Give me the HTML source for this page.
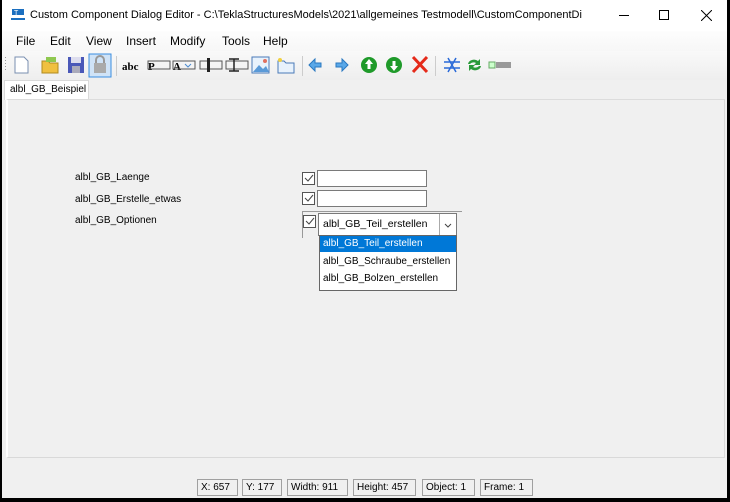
<!DOCTYPE html>
<html><head><meta charset="utf-8"><style>
*{margin:0;padding:0;box-sizing:border-box}
body{width:730px;height:502px;background:#000;font-family:"Liberation Sans",sans-serif;font-size:11px;color:#000;position:relative;overflow:hidden}
#win{position:absolute;left:2px;top:0;width:725px;height:498px;background:#f0f0f0}
.abs{position:absolute}
#title{left:0;top:0;width:725px;height:31px;background:#fff}
#menu{left:0;top:31px;width:725px;height:20px;background:linear-gradient(#fdfdfd,#f7f7f7)}
#tool{left:0;top:51px;width:725px;height:29px;background:linear-gradient(#f9f9f9,#eeeeee)}
.m{position:absolute;top:3px;font-size:12px}
.lbl{position:absolute;font-size:10px}
.cb{position:absolute;width:13px;height:13px;border:1px solid #555;background:#fff}
.cb svg{position:absolute;left:0;top:0}
.tb{position:absolute;height:17px;border:1px solid #7a7a7a;background:#fff}
.st{position:absolute;top:479px;height:17px;border:1px solid #a0a0a0;font-size:10px;padding:2px 0 0 3px;background:#f0f0f0;white-space:nowrap;overflow:hidden}
</style></head><body>
<div id="win">
<div id="title" class="abs">
 <svg class="abs" style="left:9px;top:8px" width="14" height="13"><rect x="1" y="1" width="12" height="6" fill="#1b6fc0"/><rect x="0" y="10" width="14" height="2" fill="#1b6fc0"/><text x="3" y="7" font-size="7" fill="#fff" font-family="Liberation Sans">T</text></svg>
 <div class="abs" style="left:28px;top:9px;font-size:11px;white-space:nowrap;overflow:hidden;width:552px">Custom Component Dialog Editor - C:\TeklaStructuresModels\2021\allgemeines Testmodell\CustomComponentDial...</div>
 <div class="abs" style="left:617px;top:15px;width:10px;height:1px;background:#000"></div>
 <div class="abs" style="left:657px;top:10px;width:10px;height:10px;border:1px solid #000"></div>
 <svg class="abs" style="left:699px;top:10px" width="11" height="11"><path d="M0 0L11 11M11 0L0 11" stroke="#000" stroke-width="1"/></svg>
</div>
<div id="menu" class="abs">
 <span class="m" style="left:14px">File</span><span class="m" style="left:48px">Edit</span><span class="m" style="left:84px">View</span><span class="m" style="left:124px">Insert</span><span class="m" style="left:168px">Modify</span><span class="m" style="left:220px">Tools</span><span class="m" style="left:261px">Help</span>
</div>
<div id="tool" class="abs"></div>
<svg class="abs" style="left:0;top:52px" width="520" height="28">
 <g fill="#999"><rect x="3" y="5" width="1" height="1"/><rect x="3" y="8" width="1" height="1"/><rect x="3" y="11" width="1" height="1"/><rect x="3" y="14" width="1" height="1"/><rect x="3" y="17" width="1" height="1"/></g>
 <path d="M13 5h9l4 4v12H13z" fill="#fff" stroke="#7a8fb0"/>
 <path d="M40 9h6l2 2h8v10H40z" fill="#f0c040" stroke="#b08a20"/><path d="M44 5h10v5H44z" fill="#8fc850"/>
 <rect x="66" y="5" width="16" height="16" fill="#4a58b8"/><rect x="69" y="5" width="10" height="6" fill="#dde"/><rect x="70" y="14" width="8" height="7" fill="#aab"/>
 <rect x="87" y="2" width="22" height="23" fill="#cfe3f7" stroke="#3a8ee0"/><rect x="92" y="11" width="12" height="10" fill="#aaa"/><path d="M94 11v-3a4 4 0 0 1 8 0v3" fill="none" stroke="#999" stroke-width="2"/>
 <rect x="114" y="4" width="1" height="20" fill="#ccc"/>
 <text x="120" y="18" font-family="Liberation Serif" font-size="11" font-weight="bold">abc</text>
 <text x="146" y="18" font-family="Liberation Serif" font-size="11" font-weight="bold">P</text><rect x="146" y="9" width="22" height="8" fill="none" stroke="#555"/>
 <text x="171" y="18" font-family="Liberation Serif" font-size="11" font-weight="bold">A</text><rect x="171" y="9" width="22" height="8" fill="none" stroke="#555"/><path d="M183 12l3 3 3-3" stroke="#4a8ad0" fill="none"/>
 <rect x="198" y="9" width="22" height="8" fill="none" stroke="#555"/><rect x="205" y="6" width="3" height="14" fill="#222"/>
 <rect x="224" y="9" width="22" height="8" fill="none" stroke="#555"/><path d="M227 7h10M227 19h10M232 7v12" stroke="#222" stroke-width="1.5"/>
 <rect x="250" y="5" width="17" height="16" fill="#e8f2fc" stroke="#4a7ab8"/><path d="M251 20l6-7 4 4 3-3 3 6z" fill="#5a9ad8"/><circle cx="263" cy="9" r="2" fill="#e07060"/>
 <path d="M276 9h6l2 2h8v10h-16z" fill="#e8f2fc" stroke="#4a7ab8"/><circle cx="278" cy="8" r="2" fill="#f0d040"/>
 <rect x="300" y="4" width="1" height="20" fill="#ccc"/>
 <path d="M307 13l6-6v4h6v4h-6v4z" fill="#5aa8e8" stroke="#2a78c0"/>
 <path d="M346 13l-6-6v4h-6v4h6v4z" fill="#5aa8e8" stroke="#2a78c0"/>
 <circle cx="367" cy="13" r="8" fill="#1f9a2a"/><path d="M367 7l-4 5h2.5v5h3v-5h2.5z" fill="#fff"/>
 <circle cx="392" cy="13" r="8" fill="#1f9a2a"/><path d="M392 19l-4-5h2.5v-5h3v5h2.5z" fill="#fff"/>
 <path d="M411 5l14 15M425 5L411 20" stroke="#e52a1a" stroke-width="3"/>
 <rect x="433" y="4" width="1" height="20" fill="#ccc"/>
 <path d="M442 10h16M442 16h16M446 6l8 14M454 6l-8 14" stroke="#2a6ad8" stroke-width="1.5"/>
 <path d="M466 12a6 5 0 0 1 10-3l2-2v6h-6l2-2a4 3 0 0 0-6 1z M479 14a6 5 0 0 1-10 3l-2 2v-6h6l-2 2a4 3 0 0 0 6-1z" fill="#2a9a3a"/>
 <rect x="487" y="10" width="6" height="6" fill="#cfc" stroke="#6a6"/><rect x="494" y="10" width="15" height="6" fill="#999"/>
</svg>
<div class="abs" style="left:2px;top:80px;width:85px;height:20px;background:#fff;border:1px solid #d9d9d9;border-bottom:none"></div>
<div class="abs" style="left:8px;top:84px;font-size:10px">albl_GB_Beispiel</div>
<div class="abs" style="left:4px;top:99px;width:719px;height:359px;border:1px solid #d9d9d9;border-left:2px solid #fff;border-top-color:#dcdcdc;background:#f0f0f0"></div>
<div class="lbl" style="left:73px;top:172px">albl_GB_Laenge</div>
<div class="lbl" style="left:73px;top:194px">albl_GB_Erstelle_etwas</div>
<div class="lbl" style="left:73px;top:215px">albl_GB_Optionen</div>
<div class="cb" style="left:300px;top:172px"><svg width="11" height="11"><path d="M2 5l3 3 5-6" stroke="#444" fill="none"/></svg></div>
<div class="cb" style="left:300px;top:192px"><svg width="11" height="11"><path d="M2 5l3 3 5-6" stroke="#444" fill="none"/></svg></div>
<div class="tb" style="left:315px;top:170px;width:110px"></div>
<div class="tb" style="left:315px;top:190px;width:110px"></div>
<div class="abs" style="left:300px;top:211px;width:160px;height:27px;border-top:1px solid #999;border-left:1px solid #999"></div>
<div class="cb" style="left:301px;top:215px"><svg width="11" height="11"><path d="M2 5l3 3 5-6" stroke="#444" fill="none"/></svg></div>
<div class="abs" style="left:316px;top:213px;width:139px;height:23px;background:#fff;border:1px solid #7a7a7a"></div>
<div class="abs" style="left:321px;top:218px;font-size:10.5px">albl_GB_Teil_erstellen</div>
<div class="abs" style="left:437px;top:214px;width:17px;height:21px;border-left:1px solid #aaa;background:#fff"><svg width="16" height="20"><path d="M5 10l3 3 3-3" stroke="#444" fill="none"/></svg></div>
<div class="abs" style="left:317px;top:235px;width:138px;height:56px;background:#fff;border:1px solid #666"></div>
<div class="abs" style="left:318px;top:236px;width:136px;height:16px;background:#0078d7"></div>
<div class="abs" style="left:321px;top:238px;font-size:10px;color:#fff">albl_GB_Teil_erstellen</div>
<div class="abs" style="left:321px;top:256px;font-size:10px">albl_GB_Schraube_erstellen</div>
<div class="abs" style="left:321px;top:273px;font-size:10px">albl_GB_Bolzen_erstellen</div>
<div class="st" style="left:195px;width:41px">X: 657</div>
<div class="st" style="left:240px;width:40px">Y: 177</div>
<div class="st" style="left:285px;width:61px">Width: 911</div>
<div class="st" style="left:351px;width:63px">Height: 457</div>
<div class="st" style="left:420px;width:53px">Object: 1</div>
<div class="st" style="left:478px;width:53px">Frame: 1</div>
</div>
</body></html>
